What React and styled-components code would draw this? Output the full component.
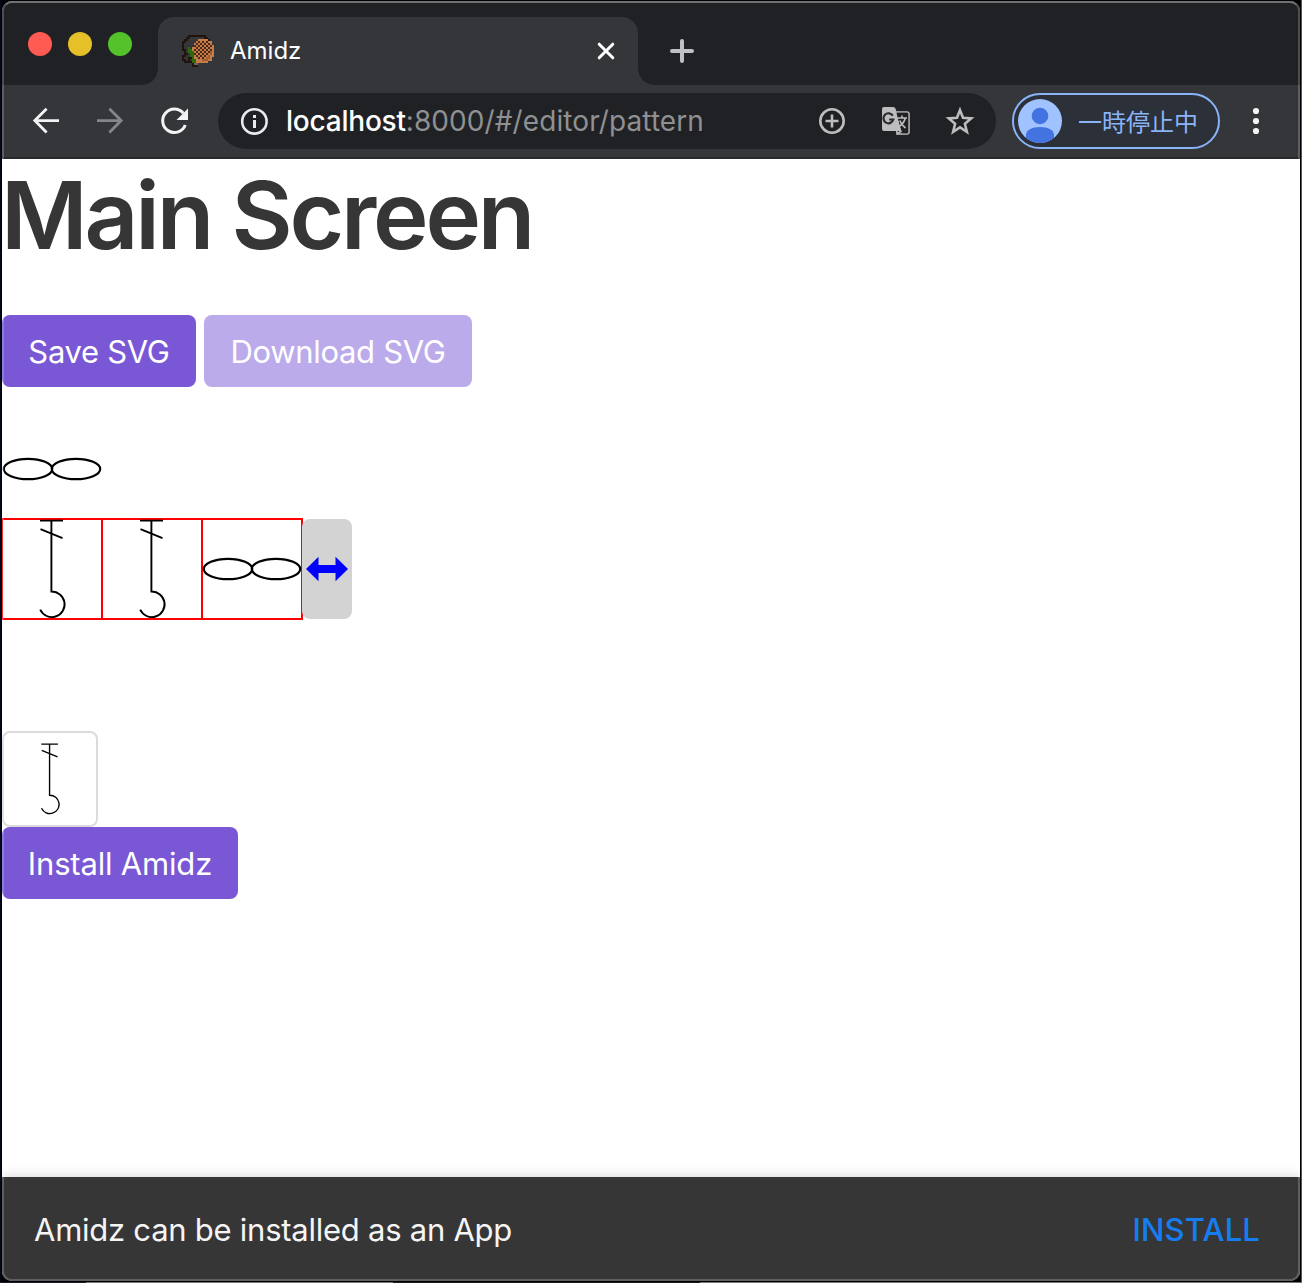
import React from 'react';
import styled, { createGlobalStyle } from 'styled-components';

const Global = createGlobalStyle`
  * { box-sizing: border-box; }
  html, body { margin: 0; height: 100%; }
  body {
    font-family: Inter, "Noto Sans CJK JP", sans-serif;
    background: #000;
    overflow: hidden;
  }
  h1, p { margin: 0; }
  button { font: inherit; border: 0; padding: 0; background: none; }
  svg { display: block; flex: none; }
`;

const Desktop = styled.main`
  width: 1302px;
  height: 1283px;
  padding: 1px 2px 2px;
  background:
    linear-gradient(to right, #1b1c2e 0 86px, #77777a 86px 393px, #1a1a1c 393px 700px, #77777a 700px) 0 100% / 100% 1px no-repeat,
    linear-gradient(to right, #03091a 0 1px, #000 1px 1301px, #55555a 1301px);
`;

const Window = styled.div`
  position: relative;
  display: flex;
  flex-direction: column;
  width: 1298px;
  height: 1280px;
  border-radius: 10px;
  overflow: hidden;
  background: #fff;

  &::after {
    content: '';
    position: absolute;
    inset: 0;
    border: 2px solid rgba(255, 255, 255, 0.2);
    border-top-color: rgba(255, 255, 255, 0.36);
    border-radius: 10px;
    pointer-events: none;
  }
`;

const TabStrip = styled.div`
  flex: none;
  display: flex;
  align-items: flex-end;
  height: 84px;
  background: #202124;
`;

const Lights = styled.div`
  display: flex;
  gap: 16px;
  width: 156px;
  padding: 0 0 29px 26px;
`;

const Light = styled.span`
  width: 24px;
  height: 24px;
  border-radius: 50%;
  background: ${(p) => p.$color};
`;

const Tab = styled.div`
  position: relative;
  display: flex;
  align-items: center;
  width: 480px;
  height: 68px;
  padding: 0 22px 0 24px;
  border-radius: 16px 16px 0 0;
  background: #35363a;
  color: #fff;

  &::before, &::after {
    content: '';
    position: absolute;
    bottom: 0;
    width: 16px;
    height: 16px;
  }
  &::before {
    right: 100%;
    background: radial-gradient(circle at 0 0, transparent 15.5px, #35363a 16px);
  }
  &::after {
    left: 100%;
    background: radial-gradient(circle at 100% 0, transparent 15.5px, #35363a 16px);
  }
`;

const TabTitle = styled.span`
  flex: 1;
  margin-left: 16px;
  font-size: 24px;
  line-height: 30px;
`;

const NewTab = styled.button`
  display: flex;
  margin: 0 0 22px 32px;
`;

const Toolbar = styled.div`
  flex: none;
  display: flex;
  align-items: center;
  height: 74px;
  padding: 0 28px 0 28px;
  background: #35363a;
  border-bottom: 2px solid #28292c;
`;

const NavButtons = styled.div`
  display: flex;
  gap: 32px;
  width: 188px;
`;

const Omnibox = styled.div`
  display: flex;
  align-items: center;
  width: 778px;
  height: 56px;
  padding: 0 20px;
  border-radius: 28px;
  background: #202124;
`;

const Address = styled.span`
  flex: 1;
  margin-left: 16px;
  font-size: 28px;
  line-height: 36px;
  white-space: nowrap;
  color: #8f9092;
  letter-spacing: 0.09px;
`;

const Host = styled.span`
  color: #fff;
  font-weight: 500;
  letter-spacing: -0.22px;
`;

const OmniActions = styled.div`
  display: flex;
  gap: 32px;
`;

const Profile = styled.div`
  display: flex;
  align-items: center;
  width: 208px;
  height: 56px;
  margin: 0 20px 0 16px;
  padding-left: 4px;
  border: 2px solid #8ab4f8;
  border-radius: 28px;
  background: #2c3039;
  color: #8ab4f8;
`;

const ProfileLabel = styled.span`
  margin-left: 16px;
  font-family: "Noto Sans CJK JP", sans-serif;
  font-size: 24px;
  line-height: 36px;
`;

const Page = styled.section`
  flex: 1;
  min-height: 0;
  display: flex;
  flex-direction: column;
  align-items: flex-start;
  background: #fff;
`;

const Title = styled.h1`
  height: 156px;
  font-size: 94px;
  font-weight: 600;
  line-height: 112px;
  letter-spacing: -3.2px;
  text-indent: -1px;
  color: #363636;
  white-space: nowrap;
`;

const ButtonRow = styled.div`
  display: flex;
  gap: 8px;
`;

const Button = styled.button`
  width: ${(p) => p.$width};
  height: 72px;
  border-radius: 8px;
  background: #7957d5;
  color: #fff;
  font-size: 31px;
  letter-spacing: ${(p) => p.$track || '-0.32px'};
  white-space: nowrap;
  ${(p) => p.disabled && 'background: #bcabea;'}
`;

const ChainRow = styled.div`
  margin-top: 32px;
  height: 100px;
`;

const GridRow = styled.div`
  display: flex;
  height: 100px;
  margin-bottom: 112px;
`;

const Handle = styled.div`
  display: flex;
  align-items: center;
  justify-content: center;
  width: 50px;
  height: 100px;
  border-radius: 8px;
  background: #d3d3d3;
`;

const StitchButton = styled.button`
  display: flex;
  align-items: center;
  justify-content: center;
  width: 96px;
  height: 96px;
  border: 2px solid #dbdbdb;
  border-radius: 8px;
  background: #fff;
`;

const Banner = styled.footer`
  flex: none;
  display: flex;
  align-items: center;
  justify-content: space-between;
  height: 104px;
  padding: 0 40px 0 32px;
  background: #363636;
  box-shadow: 0 0 12px rgba(0, 0, 0, 0.18);
  color: #f5f5f5;
  font-size: 31px;
`;

const BannerText = styled.p`
  letter-spacing: -0.25px;
`;

const InstallLink = styled.button`
  color: #167df0;
  font-weight: 550;
  letter-spacing: 0.15px;
`;

const FAVICON = [
  '...ooooooooo....',
  '..oo.......oo...',
  '.oo.....bbbbbo..',
  'oo.....bkbkbkbb.',
  'o.....bkbkbkbkb.',
  'o.....kbkbkbkbkb',
  'o..g.bbkbkbkbkbb',
  'oo.ggbkbkbkbkbkb',
  '.o.gggbkbkbkbkdb',
  '.oo.ggkbkbkbkbdb',
  'oo..ggbkbkbkbdbb',
  'o..oogbbkbkbddb.',
  'oo.o.ggbbbdddbb.',
  '.ooooggbbbbbb...',
  '.....ott........',
  '.....ooo........',
];
const FAVICON_COLORS = { o: '#21130d', b: '#c77c48', k: '#49291c', g: '#2c6b0d', d: '#a35e34', t: '#79604f' };

const Favicon = () => (
  <svg width="32" height="32" viewBox="0 0 16 16" shapeRendering="crispEdges">
    {FAVICON.flatMap((row, y) =>
      [...row].map((c, x) =>
        c === '.' ? null : <rect key={`${x}-${y}`} x={x} y={y} width="1" height="1" fill={FAVICON_COLORS[c]} />
      )
    )}
  </svg>
);

const BackIcon = () => (
  <svg width="32" height="32" fill="none" stroke="#f1f3f4" strokeWidth="2.8">
    <path d="M29 15.6H5M16.6 3.8L4.8 15.6l11.8 11.8" />
  </svg>
);

const ForwardIcon = () => (
  <svg width="32" height="32" fill="none" stroke="#85868a" strokeWidth="2.8">
    <path d="M3 15.6h24M15.4 3.8l11.8 11.8-11.8 11.8" />
  </svg>
);

const ReloadIcon = () => (
  <svg width="32" height="32" fill="none">
    <path d="M25.3 8.2A11.7 11.7 0 1 0 27.3 20" stroke="#f1f3f4" strokeWidth="3" />
    <path d="M30 3.5V15H18.5z" fill="#f1f3f4" />
  </svg>
);

const InfoIcon = () => (
  <svg width="32" height="32" fill="none">
    <circle cx="16.4" cy="16.4" r="12.2" stroke="#e8eaed" strokeWidth="2.6" />
    <path d="M15 10h3v3h-3zM15 15h3v8h-3z" fill="#e8eaed" />
  </svg>
);

const ZoomIcon = () => (
  <svg width="32" height="32" fill="none" stroke="#bdbdbf" strokeWidth="2.6">
    <circle cx="16" cy="16" r="11.7" />
    <path d="M16 9.5v13M9.5 16h13" />
  </svg>
);

const TranslateIcon = () => (
  <svg width="32" height="32" fill="none">
    <path d="M16 7h11q2 0 2 2v18q0 2-2 2H17z" stroke="#bdbdbf" strokeWidth="1.6" />
    <path d="M4 2h9q2 0 2.6 1.8L21.5 26H4q-2 0-2-2V4q0-2 2-2z" fill="#bdbdbf" />
    <path d="M16.4 7.8h11.8v20.4h-5.5L21.6 26z" fill="#202124" />
    <path d="M12.8 10.8A5 5 0 1 0 13.3 14.5H9.2" stroke="#2a2b2e" strokeWidth="2.2" />
    <path d="M17.5 13H27M22 10.5V13M25.2 13c-.8 4-3 6.5-6 8.5M19.8 15.5c1 3 3 5.5 5.7 7.5" stroke="#bdbdbf" strokeWidth="1.6" />
    <path d="M17 29l4.5-3" stroke="#bdbdbf" strokeWidth="1.6" />
  </svg>
);

const StarIcon = () => (
  <svg width="32" height="32" fill="none" stroke="#bdbdbf" strokeWidth="2.6">
    <path d="M16 5.1l3 7.7 8.2.6-6.3 5.3 2 8.1-6.9-4.4-6.9 4.4 2-8.1-6.3-5.3 8.2-.6z" />
  </svg>
);

const Avatar = () => (
  <svg width="44" height="44">
    <clipPath id="avatar"><circle cx="22" cy="22" r="22" /></clipPath>
    <g clipPath="url(#avatar)">
      <rect width="44" height="44" fill="#a0c2ff" />
      <circle cx="22" cy="17" r="8.3" fill="#4273e0" />
      <path d="M8 44V36C8 31 14 28 22 28s14 3 14 8v8z" fill="#4273e0" />
    </g>
  </svg>
);

const MenuIcon = () => (
  <svg width="32" height="32" fill="#f1f3f4">
    <circle cx="16" cy="6" r="3.1" /><circle cx="16" cy="16" r="3.1" /><circle cx="16" cy="26" r="3.1" />
  </svg>
);

const CloseIcon = () => (
  <svg width="20" height="20" stroke="#fff" strokeWidth="3" strokeLinecap="round">
    <path d="M3.2 3.2l13.6 13.6M16.8 3.2L3.2 16.8" />
  </svg>
);

const PlusIcon = () => (
  <svg width="24" height="24" stroke="#bdc1c6" strokeWidth="4" strokeLinecap="round">
    <path d="M12 2v20M2 12h20" />
  </svg>
);

const Chain = () => (
  <g fill="none" stroke="#000" strokeWidth="2.2">
    <ellipse cx="26" cy="50" rx="24.2" ry="10.2" />
    <ellipse cx="74" cy="50" rx="24.2" ry="10.2" />
  </g>
);

const Treble = () => (
  <path
    d="M38 1.6h23M49.4 1.6V72.5a12.8 12.8 0 1 1-11.2 18.2M38.5 10.2l22 9"
    fill="none"
    stroke="#000"
    strokeWidth="1.9"
  />
);

const StitchGrid = () => (
  <svg width="300" height="100" overflow="visible">
    <rect x="0" y="0" width="300" height="100" fill="none" stroke="#f00" strokeWidth="2" />
    <path d="M100 0v100M200 0v100" stroke="#f00" strokeWidth="2" />
    <Treble />
    <g transform="translate(100 0)"><Treble /></g>
    <g transform="translate(200 0)"><Chain /></g>
  </svg>
);

const ResizeIcon = () => (
  <svg width="42" height="26" fill="#00f">
    <path d="M0 13L12.5 .7V9h17V.7L42 13 29.5 25.3V17h-17v8.3z" />
  </svg>
);

export default function App() {
  return (
    <Desktop>
      <Global />
      <Window>
        <TabStrip>
          <Lights>
            <Light $color="#ff5b52" />
            <Light $color="#e6c029" />
            <Light $color="#53c22b" />
          </Lights>
          <Tab>
            <Favicon />
            <TabTitle>Amidz</TabTitle>
            <CloseIcon />
          </Tab>
          <NewTab aria-label="New tab"><PlusIcon /></NewTab>
        </TabStrip>
        <Toolbar>
          <NavButtons><BackIcon /><ForwardIcon /><ReloadIcon /></NavButtons>
          <Omnibox>
            <InfoIcon />
            <Address><Host>localhost</Host>:8000/#/editor/pattern</Address>
            <OmniActions><ZoomIcon /><TranslateIcon /><StarIcon /></OmniActions>
          </Omnibox>
          <Profile><Avatar /><ProfileLabel>一時停止中</ProfileLabel></Profile>
          <MenuIcon />
        </Toolbar>
        <Page>
          <Title>Main Screen</Title>
          <ButtonRow>
            <Button $width="194px">Save SVG</Button>
            <Button $width="268px" disabled>Download SVG</Button>
          </ButtonRow>
          <ChainRow><svg width="100" height="100"><Chain /></svg></ChainRow>
          <GridRow>
            <StitchGrid />
            <Handle><ResizeIcon /></Handle>
          </GridRow>
          <StitchButton aria-label="Treble crochet">
            <svg width="72" height="72" viewBox="0 0 100 100"><Treble /></svg>
          </StitchButton>
          <Button $width="236px" $track="-0.18px">Install Amidz</Button>
        </Page>
        <Banner>
          <BannerText>Amidz can be installed as an App</BannerText>
          <InstallLink>INSTALL</InstallLink>
        </Banner>
      </Window>
    </Desktop>
  );
}
